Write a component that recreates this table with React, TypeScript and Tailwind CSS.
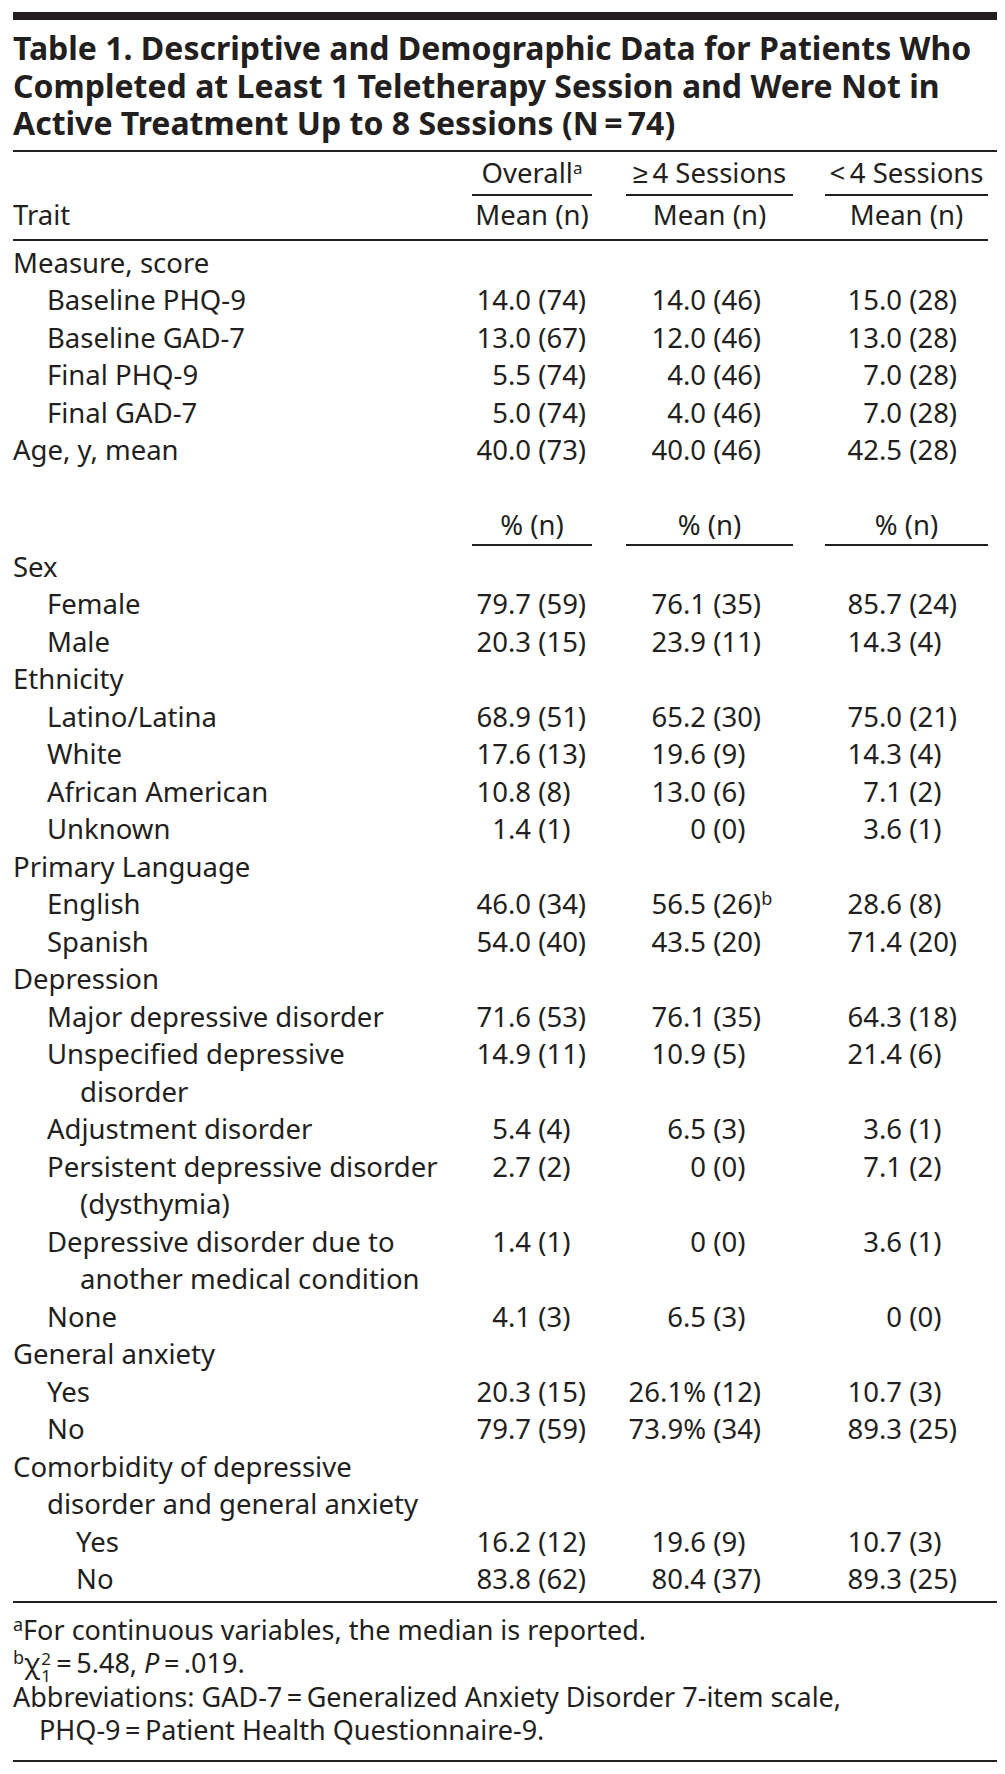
type Val = { n: string; p: string; sup?: string };
type Row = { label: string[]; level: number; v?: [Val, Val, Val] };

const v = (s: string, sup?: string): Val => {
  const i = s.indexOf(" (");
  return { n: s.slice(0, i), p: s.slice(i + 1), sup };
};

const topRows: Row[] = [
  { label: ["Measure, score"], level: 0 },
  { label: ["Baseline PHQ-9"], level: 1, v: [v("14.0 (74)"), v("14.0 (46)"), v("15.0 (28)")] },
  { label: ["Baseline GAD-7"], level: 1, v: [v("13.0 (67)"), v("12.0 (46)"), v("13.0 (28)")] },
  { label: ["Final PHQ-9"], level: 1, v: [v("5.5 (74)"), v("4.0 (46)"), v("7.0 (28)")] },
  { label: ["Final GAD-7"], level: 1, v: [v("5.0 (74)"), v("4.0 (46)"), v("7.0 (28)")] },
  { label: ["Age, y, mean"], level: 0, v: [v("40.0 (73)"), v("40.0 (46)"), v("42.5 (28)")] },
];

const bottomRows: Row[] = [
  { label: ["Sex"], level: 0 },
  { label: ["Female"], level: 1, v: [v("79.7 (59)"), v("76.1 (35)"), v("85.7 (24)")] },
  { label: ["Male"], level: 1, v: [v("20.3 (15)"), v("23.9 (11)"), v("14.3 (4)")] },
  { label: ["Ethnicity"], level: 0 },
  { label: ["Latino/Latina"], level: 1, v: [v("68.9 (51)"), v("65.2 (30)"), v("75.0 (21)")] },
  { label: ["White"], level: 1, v: [v("17.6 (13)"), v("19.6 (9)"), v("14.3 (4)")] },
  { label: ["African American"], level: 1, v: [v("10.8 (8)"), v("13.0 (6)"), v("7.1 (2)")] },
  { label: ["Unknown"], level: 1, v: [v("1.4 (1)"), v("0 (0)"), v("3.6 (1)")] },
  { label: ["Primary Language"], level: 0 },
  { label: ["English"], level: 1, v: [v("46.0 (34)"), v("56.5 (26)", "b"), v("28.6 (8)")] },
  { label: ["Spanish"], level: 1, v: [v("54.0 (40)"), v("43.5 (20)"), v("71.4 (20)")] },
  { label: ["Depression"], level: 0 },
  { label: ["Major depressive disorder"], level: 1, v: [v("71.6 (53)"), v("76.1 (35)"), v("64.3 (18)")] },
  { label: ["Unspecified depressive", "disorder"], level: 1, v: [v("14.9 (11)"), v("10.9 (5)"), v("21.4 (6)")] },
  { label: ["Adjustment disorder"], level: 1, v: [v("5.4 (4)"), v("6.5 (3)"), v("3.6 (1)")] },
  { label: ["Persistent depressive disorder", "(dysthymia)"], level: 1, v: [v("2.7 (2)"), v("0 (0)"), v("7.1 (2)")] },
  { label: ["Depressive disorder due to", "another medical condition"], level: 1, v: [v("1.4 (1)"), v("0 (0)"), v("3.6 (1)")] },
  { label: ["None"], level: 1, v: [v("4.1 (3)"), v("6.5 (3)"), v("0 (0)")] },
  { label: ["General anxiety"], level: 0 },
  { label: ["Yes"], level: 1, v: [v("20.3 (15)"), v("26.1% (12)"), v("10.7 (3)")] },
  { label: ["No"], level: 1, v: [v("79.7 (59)"), v("73.9% (34)"), v("89.3 (25)")] },
  { label: ["Comorbidity of depressive", "disorder and general anxiety"], level: 0 },
  { label: ["Yes"], level: 2, v: [v("16.2 (12)"), v("19.6 (9)"), v("10.7 (3)")] },
  { label: ["No"], level: 2, v: [v("83.8 (62)"), v("80.4 (37)"), v("89.3 (25)")] },
];

const indent = ["pl-0", "pl-[34px]", "pl-[63px]"];
const contIndent = ["pl-[34px]", "pl-[67px]", "pl-[96px]"];
const colBox = ["w-[120px]", "ml-[34px] w-[167px]", "ml-[32px] w-[163px]"];
const numBox = ["w-[59px]", "w-[80px]", "w-[77px]"];

function Cell({ c, i }: { c?: Val; i: number }) {
  return (
    <div className={`${colBox[i]} flex`}>
      {c && (
        <>
          <span className={`${numBox[i]} shrink-0 text-right`}>{c.n}</span>
          <span className="whitespace-pre">
            {" " + c.p}
            {c.sup && <sup className="text-[18px]">{c.sup}</sup>}
          </span>
        </>
      )}
    </div>
  );
}

function TableRow({ r }: { r: Row }) {
  return (
    <div className="flex leading-[37.5px]">
      <div className="w-[459px]">
        {r.label.map((l, i) => (
          <div key={i} className={i === 0 ? indent[r.level] : contIndent[r.level]}>
            {l}
          </div>
        ))}
      </div>
      {[0, 1, 2].map((i) => (
        <Cell key={i} c={r.v?.[i]} i={i} />
      ))}
    </div>
  );
}

function HeadRow({ label, cols }: { label?: string; cols: React.ReactNode[] }) {
  return (
    <div className="flex leading-[37.5px]">
      <div className="w-[459px]">{label}</div>
      {cols.map((c, i) => (
        <div key={i} className={`${colBox[i]} text-center`}>
          {c}
        </div>
      ))}
    </div>
  );
}

function Underlines() {
  return (
    <div className="flex h-[2px]">
      <div className="w-[459px]" />
      {[0, 1, 2].map((i) => (
        <div key={i} className={`${colBox[i]} bg-[#231f20]`} />
      ))}
    </div>
  );
}

export default function App() {
  return (
    <div className="w-[1005px] min-h-[1774px] bg-white pt-3 pl-[13px] text-[#231f20] font-['Noto_Sans',sans-serif] whitespace-nowrap">
      <div className="h-2 w-[984px] bg-[#231f20]" />

      <h1 className="mt-[9px] text-[32px] font-bold leading-[37.5px]">
        Table 1. Descriptive and Demographic Data for Patients Who
        <br />
        Completed at Least 1 Teletherapy Session and Were Not in
        <br />
        Active Treatment Up to 8 Sessions (N{"\u2009=\u2009"}74)
      </h1>
      <div className="mt-2 h-[2px] w-[984px] bg-[#231f20]" />

      <div className="w-[975px] text-[27.5px]">
        <div className="mt-[2px]">
          <HeadRow
            cols={[
              <>
                Overall<sup className="text-[17px]">a</sup>
              </>,
              <>≥{"\u2009"}4 Sessions</>,
              <>&lt;{"\u2009"}4 Sessions</>,
            ]}
          />
        </div>
        <div className="mt-[3px]">
          <Underlines />
        </div>
        <HeadRow label="Trait" cols={["Mean (n)", "Mean (n)", "Mean (n)"]} />
        <div className="mt-[5px] h-[2px] bg-[#231f20]" />

        <div className="mt-[3px]">
          {topRows.map((r, i) => (
            <TableRow key={i} r={r} />
          ))}
          <div className="h-[37.5px]" />
          <HeadRow cols={["% (n)", "% (n)", "% (n)"]} />
          <Underlines />
        </div>

        <div className="mt-[2px]">
          {bottomRows.map((r, i) => (
            <TableRow key={i} r={r} />
          ))}
        </div>
      </div>

      <div className="mt-[3px] h-[2px] w-[984px] bg-[#231f20]" />

      <div className="mt-[10px] text-[27px] leading-[33px]">
        <div>
          <sup className="text-[18px]">a</sup>For continuous variables, the median is reported.
        </div>
        <div className="flex items-baseline">
          <sup className="text-[18px]">b</sup>
          <span>χ</span>
          <span className="mx-[1px] inline-flex flex-col text-[17px] leading-[17px] translate-y-[4px] self-center">
            <span>2</span>
            <span>1</span>
          </span>
          <span className="whitespace-pre">
            {"\u2009=\u2009"}5.48, <i>P</i>
            {"\u2009=\u2009"}.019.
          </span>
        </div>
        <div>Abbreviations: GAD-7{"\u2009=\u2009"}Generalized Anxiety Disorder 7-item scale,</div>
        <div className="pl-[26px]">PHQ-9{"\u2009=\u2009"}Patient Health Questionnaire-9.</div>
      </div>

      <div className="mt-[14px] h-[2px] w-[984px] bg-[#231f20]" />
    </div>
  );
}
